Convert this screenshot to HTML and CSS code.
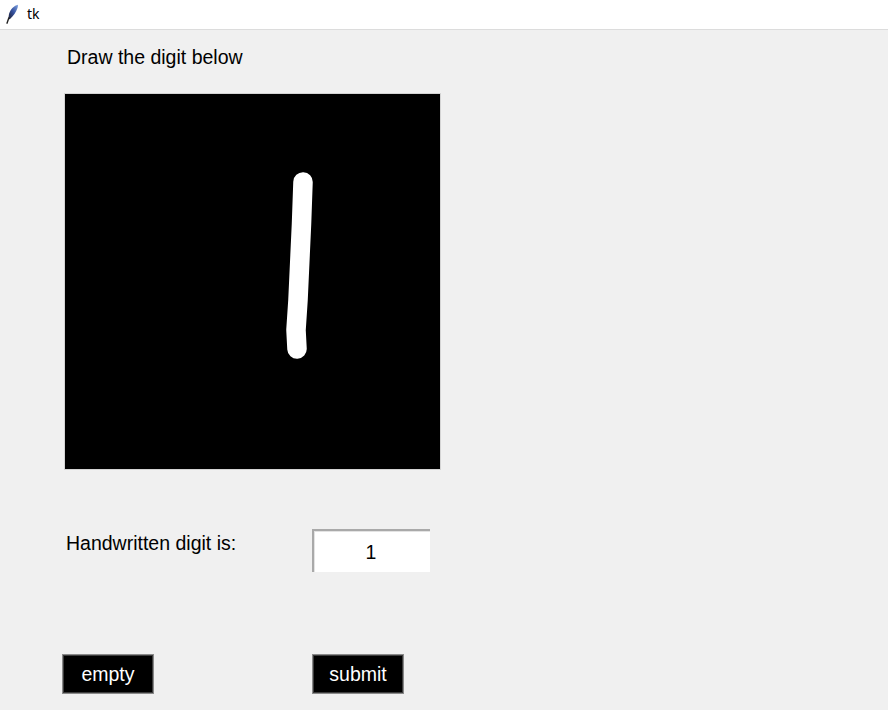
FILE: index.html
```html
<!DOCTYPE html>
<html>
<head>
<meta charset="utf-8">
<title>tk</title>
<link rel="stylesheet" href="styles.css">
</head>
<body>
<div class="titlebar">
  <svg class="feather" width="14" height="20" viewBox="0 0 14 20">
    <defs>
      <linearGradient id="fg" x1="1" y1="0" x2="0" y2="1">
        <stop offset="0" stop-color="#7da0e0"/>
        <stop offset="0.5" stop-color="#34509c"/>
        <stop offset="1" stop-color="#1c1c2c"/>
      </linearGradient>
    </defs>
    <path d="M12.8 0.8 C9.5 1.5 5.5 5 4 10 L3.2 15.5 L5 15 C8.5 12 11 8 12.3 4.5 C12.9 3 13.1 1.8 12.8 0.8 Z" fill="url(#fg)"/>
    <path d="M3.8 14 L2 19.2" stroke="#222" stroke-width="1.4" stroke-linecap="round"/>
  </svg>
  <span class="title">tk</span>
</div>
<main class="app">
  <p class="prompt">Draw the digit below</p>
  <div class="canvas">
    <svg width="375" height="375" viewBox="0 0 375 375">
      <path d="M238 88 L236.5 130 L233 206 L231 236 L232 255" fill="none" stroke="#fff" stroke-width="19.5" stroke-linecap="round" stroke-linejoin="round"/>
    </svg>
  </div>
  <div class="result-row">
    <span class="label">Handwritten digit is:</span>
    <div class="entry">1</div>
  </div>
  <div class="buttons">
    <button class="btn">empty</button>
    <button class="btn">submit</button>
  </div>
</main>
</body>
</html>
```
FILE: styles.css
```css
html, body {
  margin: 0;
  padding: 0;
}
body {
  background: #f0f0f0;
  font-family: "Liberation Sans", Arial, sans-serif;
  color: #000;
  width: 888px;
  height: 710px;
  overflow: hidden;
}
.titlebar {
  height: 29px;
  background: #fff;
  border-bottom: 1px solid #dcdcdc;
  display: flex;
  align-items: center;
  padding-left: 5px;
  box-sizing: content-box;
}
.feather {
  display: block;
  margin-top: -2px;
}
.title {
  font-family: "Noto Sans", "DejaVu Sans", sans-serif;
  font-size: 14px;
  margin-left: 8px;
  margin-top: -3px;
  color: #000;
}
.app {
  display: flex;
  flex-direction: column;
  align-items: flex-start;
  padding: 16px 0 0 64px;
}
.prompt {
  margin: 0 0 0 3px;
  font-size: 19.5px;
  line-height: 22px;
}
.canvas {
  margin-top: 25px;
  width: 375px;
  height: 375px;
  background: #000;
  border: 1px solid #d4d4d4;
}
.canvas svg {
  display: block;
}
.result-row {
  margin-top: 59px;
  display: grid;
  grid-template-columns: 248px 118px;
  align-items: start;
}
.label {
  margin: 3px 0 0 2px;
  font-size: 19.5px;
  line-height: 22px;
}
.entry {
  box-sizing: border-box;
  width: 118px;
  height: 43px;
  background: #fff;
  border-top: 2px solid #a9a9a9;
  border-left: 2px solid #a9a9a9;
  box-shadow: inset 1px 1px 0 #e3e3e3;
  display: flex;
  align-items: center;
  justify-content: center;
  font-size: 19.5px;
  padding: 1px 2px 0 0;
}
.buttons {
  margin-top: 82px;
  margin-left: -2px;
  display: grid;
  grid-template-columns: 250px 92px;
}
.btn {
  box-sizing: border-box;
  width: 92px;
  height: 40px;
  background: #000;
  color: #fff;
  border: 1px solid #8a8a8a;
  box-shadow: inset 0 0 0 1px #3c3c3c;
  font-family: "Liberation Sans", Arial, sans-serif;
  font-size: 19.5px;
  padding: 0;
  margin: 0;
}
```
